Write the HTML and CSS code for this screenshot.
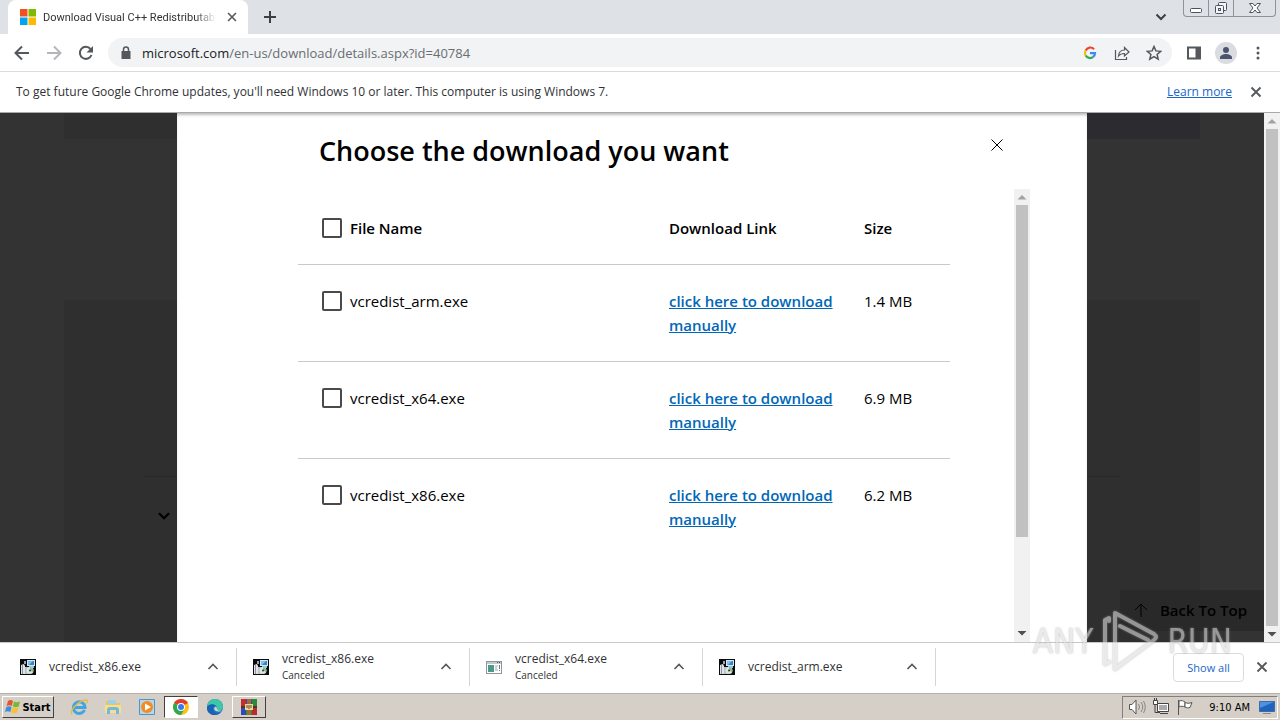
FILE: index.html
```html
<!DOCTYPE html>
<html lang="en">
  <head>
    <meta charset="utf-8">
    <title>Download Visual C++ Redistributable</title>
    <link rel="stylesheet" href="styles.css">
  </head>
  <body>
    <!-- shapes used more than once -->
    <svg class="defs" width="0" height="0">
      <symbol id="x" viewBox="0 0 16 16"><path d="M3.500 3.500l9 9M12.500 3.500l-9 9" fill="none" stroke="currentColor" stroke-width="1.800"/></symbol>
      <symbol id="up" viewBox="0 0 16 16"><path d="M3.500 10L8 5.500l4.500 4.500" fill="none" stroke="currentColor" stroke-width="1.600"/></symbol>
      <symbol id="down" viewBox="0 0 16 16"><path d="M3.500 5.500L8 10l4.500-4.500" fill="none" stroke="currentColor" stroke-width="2"/></symbol>
      <symbol id="tri-up" viewBox="0 0 16 16"><path d="M3.500 10.500h9L8 6z" fill="currentColor"/></symbol>
      <symbol id="tri-down" viewBox="0 0 16 16"><path d="M3.500 6h9L8 10.500z" fill="currentColor"/></symbol>
      <symbol id="installer" viewBox="0 0 16 16">
        <rect width="16" height="16" fill="#0a0a0a"/>
        <path d="M7 1h8v6H7z" fill="#d5e6f2"/><path d="M8 2h6v4H8z" fill="#2f86c8"/><path d="M8 2h5L9 6H8z" fill="#7cc0ec"/>
        <path d="M9 7h5v2H9z" fill="#a9bccb"/>
        <path d="M1 6l3-1 1 2v8H1z" fill="#dfe3e8"/><path d="M2 6h1v9H2z" fill="#8894a3"/>
        <path d="M5 8h4v7H5z" fill="#b7c2cc"/><path d="M4 2h2v3H4z" fill="#9aa4ae"/>
        <circle cx="10" cy="11.500" r="3.500" fill="#dbe8dd"/><path d="M10 8a3.500 3.500 0 0 1 3 5l-3-1.500z" fill="#7fc09b"/><circle cx="10" cy="11.500" r="1" fill="#333"/>
      </symbol>
    </svg>

    <header class="tabstrip">
      <div class="tab">
        <svg class="i16" viewBox="0 0 16 16"><path d="M0 0h7.500v7.500H0z" fill="#f25022"/><path d="M8.500 0H16v7.500H8.500z" fill="#7fba00"/><path d="M0 8.500h7.500V16H0z" fill="#00a4ef"/><path d="M8.500 8.500H16V16H8.500z" fill="#ffb900"/></svg>
        <span class="tab-title">Download Visual C++ Redistributable</span>
        <button class="icon" aria-label="Close tab"><svg class="i14"><use href="#x"/></svg></button>
      </div>
      <button class="icon new-tab" aria-label="New tab"><svg class="i16" viewBox="0 0 16 16"><path d="M8 2v12M2 8h12" stroke="currentColor" stroke-width="2"/></svg></button>
      <button class="icon search-tabs" aria-label="Search tabs"><svg class="i16"><use href="#down"/></svg></button>
      <div class="window-buttons">
        <button aria-label="Minimize"><svg width="14" height="14" viewBox="0 0 14 14"><rect x="1.500" y="7.500" width="11" height="4" rx="1" fill="#fff" stroke="#4c5360"/></svg></button>
        <button aria-label="Restore"><svg width="14" height="14" viewBox="0 0 14 14" fill="#f4f5f7" stroke="#4c5360"><rect x="4.500" y="1.500" width="8" height="8" rx="1"/><rect x="1.500" y="4.500" width="8" height="8" rx="1"/><rect x="4.500" y="7.500" width="2" height="2"/></svg></button>
        <button class="wide" aria-label="Close"><svg width="14" height="14" viewBox="0 0 14 14"><path d="M1.500 2.500h3.500L7 5l2-2.500h3.500L9 7l3.500 4.500H9L7 9l-2 2.500H1.500L5 7z" fill="#fff" stroke="#4c5360"/></svg></button>
      </div>
    </header>

    <nav class="toolbar">
      <button class="icon" aria-label="Back"><svg class="i16" viewBox="0 0 16 16"><path d="M15 8H2M8 1.500L1.500 8 8 14.500" fill="none" stroke="currentColor" stroke-width="2"/></svg></button>
      <button class="icon off" aria-label="Forward"><svg class="i16" viewBox="0 0 16 16"><path d="M1 8h13M8 1.500L14.500 8 8 14.500" fill="none" stroke="currentColor" stroke-width="2"/></svg></button>
      <button class="icon" aria-label="Reload"><svg class="i16" viewBox="0 0 16 16"><path d="M13.500 10A6 6 0 1 1 12.500 4" fill="none" stroke="currentColor" stroke-width="2"/><path d="M15 1v6.500H8.500z" fill="currentColor"/></svg></button>
      <div class="omnibox">
        <svg class="i14 lock" viewBox="0 0 14 14"><path d="M2.500 5h9v8h-9z" fill="currentColor"/><path d="M4.500 6V3.500a2.500 2.500 0 0 1 5 0V6" fill="none" stroke="currentColor" stroke-width="1.500"/></svg>
        <a class="url" href="#"><b>microsoft.com</b>/en-us/download/details.aspx?id=40784</a>
        <button class="icon" aria-label="Google"><svg class="i14" viewBox="0 0 14 14" fill="none" stroke-width="2.200"><path d="M11 3.200A5 5 0 0 0 2.700 4.500" stroke="#ea4335"/><path d="M2.700 4.500a5 5 0 0 0 0 5" stroke="#fbbc05"/><path d="M2.700 9.500a5 5 0 0 0 7.500 1.400" stroke="#34a853"/><path d="M10.200 10.900A5 5 0 0 0 12 7.200H7" stroke="#4285f4"/></svg></button>
        <button class="icon" aria-label="Share"><svg class="i16" viewBox="0 0 16 16" fill="none" stroke="currentColor" stroke-width="1.200"><path d="M1.500 5v9.500h11V12"/><path d="M4.500 11c.3-4 2.500-6 6-6V2.500L15 7l-4.500 4V8.500c-2.500 0-4.500.5-6 2.500z"/></svg></button>
        <button class="icon" aria-label="Bookmark"><svg class="i16" viewBox="0 0 16 16"><path d="M8 1.500l1.900 4.400 4.800.4-3.600 3.200 1.100 4.700L8 11.700l-4.200 2.500 1.100-4.700L1.300 6.300l4.800-.4z" fill="none" stroke="currentColor" stroke-width="1.500"/></svg></button>
      </div>
      <button class="icon" aria-label="Side panel"><svg class="i16" viewBox="0 0 16 16"><path d="M1 1.500h14v13H1z" fill="currentColor"/><path d="M3 3.500h6.500v9H3z" fill="#fff"/></svg></button>
      <button class="icon" aria-label="Profile"><svg class="i22" viewBox="0 0 22 22"><circle cx="11" cy="11" r="11" fill="#dadce0"/><circle cx="11" cy="8" r="3" fill="#4a5470"/><path d="M5 17v-1.500c0-2.300 3.500-3.500 6-3.500s6 1.200 6 3.500V17z" fill="#4a5470"/></svg></button>
      <button class="icon" aria-label="Menu"><svg class="i16" viewBox="0 0 16 16" fill="currentColor"><circle cx="8" cy="3" r="1.500"/><circle cx="8" cy="8" r="1.500"/><circle cx="8" cy="13" r="1.500"/></svg></button>
    </nav>

    <div class="infobar">
      <span>To get future Google Chrome updates, you'll need Windows 10 or later. This computer is using Windows 7.</span>
      <a href="#">Learn more</a>
      <button class="icon" aria-label="Dismiss"><svg class="i16"><use href="#x"/></svg></button>
    </div>

    <div class="viewport">
      <div class="page">
        <div class="banner"><div class="banner-art"></div></div>
        <div class="panel">
          <div class="accordion"><svg class="i18"><use href="#down"/></svg></div>
        </div>
        <a class="to-top" href="#"><svg class="i16" viewBox="0 0 16 16"><path d="M8 15V2M2 8l6-6 6 6" fill="none" stroke="currentColor"/></svg>Back To Top</a>

        <div class="modal" role="dialog" aria-labelledby="modal-title">
          <div class="modal-head">
            <h1 id="modal-title">Choose the download you want</h1>
            <button class="icon" aria-label="Close"><svg class="i14" viewBox="0 0 14 14"><path d="M1.500 1.500l11 11M12.500 1.500l-11 11" stroke="currentColor"/></svg></button>
          </div>
          <div class="modal-body">
            <table>
              <thead>
                <tr>
                  <th class="col-name"><label><input type="checkbox">File Name</label></th>
                  <th class="col-link">Download Link</th>
                  <th>Size</th>
                </tr>
              </thead>
              <tbody>
                <tr>
                  <td><label><input type="checkbox">vcredist_arm.exe</label></td>
                  <td><a href="#">click here to download manually</a></td>
                  <td>1.4 MB</td>
                </tr>
                <tr>
                  <td><label><input type="checkbox">vcredist_x64.exe</label></td>
                  <td><a href="#">click here to download manually</a></td>
                  <td>6.9 MB</td>
                </tr>
                <tr>
                  <td><label><input type="checkbox">vcredist_x86.exe</label></td>
                  <td><a href="#">click here to download manually</a></td>
                  <td>6.2 MB</td>
                </tr>
              </tbody>
            </table>
            <div class="scrollbar">
              <svg class="i16"><use href="#tri-up"/></svg>
              <div class="track"><div class="thumb"></div></div>
              <svg class="i16 active"><use href="#tri-down"/></svg>
            </div>
          </div>
        </div>
      </div>
      <div class="scrollbar">
        <svg class="i16"><use href="#tri-up"/></svg>
        <div class="track"><div class="thumb full"></div></div>
        <svg class="i16 active"><use href="#tri-down"/></svg>
      </div>
    </div>

    <div class="shelf">
      <div class="download">
        <svg class="i16"><use href="#installer"/></svg>
        <div class="file">vcredist_x86.exe</div>
        <button class="icon" aria-label="Options"><svg class="i16"><use href="#up"/></svg></button>
      </div>
      <div class="download">
        <svg class="i16"><use href="#installer"/></svg>
        <div class="file">vcredist_x86.exe<small>Canceled</small></div>
        <button class="icon" aria-label="Options"><svg class="i16"><use href="#up"/></svg></button>
      </div>
      <div class="download">
        <svg class="i16" viewBox="0 0 16 16"><rect x=".5" y="2.500" width="15" height="12" fill="#fff" stroke="#8f979e"/><path d="M1 3h14v2H1z" fill="#c3c9ce"/><path d="M11 3.500h1M13 3.500h1" stroke="#555"/><path d="M2 6h6v7H2z" fill="#4c9a8a"/><path d="M9 7h3M9 9h2M9 11h3" stroke="#9aa"/><path d="M13.500 6v4M13.500 11v1" stroke="#777"/></svg>
        <div class="file">vcredist_x64.exe<small>Canceled</small></div>
        <button class="icon" aria-label="Options"><svg class="i16"><use href="#up"/></svg></button>
      </div>
      <div class="download">
        <svg class="i16"><use href="#installer"/></svg>
        <div class="file">vcredist_arm.exe</div>
        <button class="icon" aria-label="Options"><svg class="i16"><use href="#up"/></svg></button>
      </div>
      <button class="show-all">Show all</button>
      <button class="icon" aria-label="Close shelf"><svg class="i16"><use href="#x"/></svg></button>
    </div>

    <footer class="taskbar">
      <button class="start raised">
        <svg class="i16" viewBox="0 0 16 16"><path d="M3 2c2-1.500 3.500-1 5 0L6.800 7C5 6 3.500 6 1.600 7z" fill="#e8532a"/><path d="M9 2.500c1.700 1 3.500 1 6 0L13.700 7.500c-2 1-4 1-5.900 0z" fill="#7ab833"/><path d="M1.400 8c2-1 3.500-1 5.200 0L5.300 13c-1.800-1-3.300-1-5.300 0z" fill="#3b8ede"/><path d="M7.500 8.500c2 1 4 1 6 0l-1.400 5c-2 1-4 1-5.900 0z" fill="#fbc02d"/></svg>
        Start
      </button>
      <button class="task" aria-label="Internet Explorer"><svg class="i18" viewBox="0 0 18 18" fill="none"><path d="M14.500 12A5.800 5.800 0 1 1 15 9.500H5" stroke="#42a5e0" stroke-width="3"/><path d="M2 16.500C-1 12 10 2 16 2c2 0 1.500 2 .5 3.500" stroke="#e8bb3a" stroke-width="1.300"/></svg></button>
      <button class="task" aria-label="Explorer"><svg class="i18" viewBox="0 0 18 18"><path d="M2 3h5l1 2h8v7H2z" fill="#e9c65c"/><path d="M4 2h8v4H4z" fill="#9ed0e8"/><path d="M1 7h16v8H1z" fill="#f6e08f"/><path d="M3 16v-4c0-2 1-3 3-3h6c2 0 3 1 3 3v4h-3v-4H6v4z" fill="#73b9dc"/></svg></button>
      <button class="task" aria-label="Media Player"><svg class="i18" viewBox="0 0 18 18"><path d="M1.500 1.500h15v15h-15z" fill="#b5d6ee" stroke="#4d94c9"/><circle cx="9" cy="9" r="6" fill="#f28c1e"/><path d="M7 5.500v7L13 9z" fill="#fff"/></svg></button>
      <button class="task pressed" aria-label="Chrome"><svg class="i16" viewBox="0 0 16 16"><circle cx="8" cy="8" r="8" fill="#fbc116"/><path d="M8 8L1.100 4A8 8 0 0 1 14.900 4z" fill="#e33b2e"/><path d="M1.100 4A8 8 0 0 0 8 16l3.500-6L8 8z" fill="#2da94f"/><circle cx="8" cy="8" r="4" fill="#fff"/><circle cx="8" cy="8" r="3" fill="#3b79e8"/></svg></button>
      <button class="task" aria-label="Edge"><svg class="i16" viewBox="0 0 16 16"><circle cx="8" cy="8" r="8" fill="#1478c8"/><path d="M0 8a8 8 0 0 1 16 0c0 2.500-1.800 3.500-4 3.500-1.500 0-2.600-.5-2-1.500C11 7.500 8 5 5 5.500 2.500 6 1 7 0 8z" fill="#3cc8a8"/><path d="M0 8c1.500-3 7-4 9-.5C6.500 6.500 5 9 6.500 12c1 2 3.500 3 7 1.800C9 18-1 16 0 8z" fill="#1b62b5"/><path d="M9 7.500C6.800 8 6.500 10 8 11.500c1.500 1.300 4 1.500 6.500.2-1.500-.1-2.500 0-3.500-.4C9.500 10.500 10.500 9 9 7.500z" fill="#d4d0c8"/></svg></button>
      <button class="task raised" aria-label="WinRAR"><svg class="i16" viewBox="0 0 16 16"><path d="M0 0h5v7H0z" fill="#c1302c"/><path d="M5 0h6v7H5z" fill="#3a4db5"/><path d="M11 0h5v7h-5z" fill="#2b8a3a"/><path d="M0 9h5v7H0z" fill="#3249b0"/><path d="M5 9h6v7H5z" fill="#2c8f45"/><path d="M11 9h5v7h-5z" fill="#b62d2d"/><path d="M0 7h16v2H0z" fill="#5b3226"/><path d="M6 0h4v16H6z" fill="#a8682e"/><path d="M4 5h8v6H4z" fill="#e9d9a0"/><path d="M6 6v3M8 6v4M10 6v3" stroke="#6a3b1c"/></svg></button>
      <div class="tray">
        <svg class="i18" viewBox="0 0 18 18" fill="#fff" stroke="#555"><path d="M1.500 6.500H4l4-4.500v14l-4-4.500H1.500z"/><path d="M10.500 6q2 3 0 6M13 4q3.500 5 0 10M15.500 3q3.500 6 0 12" fill="none" stroke="#888"/></svg>
        <svg class="i18" viewBox="0 0 18 18" fill="#fff" stroke="#444"><path d="M5.500 5.500h11v8h-11z"/><path d="M7 7h8v5H7z" fill="#aaa" stroke="none"/><path d="M8 15.500h8M3 7v7.500h5" fill="none"/><path d="M1.500 2.500h4v4h-4zM2.500 0v2M4.500 0v2"/></svg>
        <svg class="i18" viewBox="0 0 18 18" fill="#fff" stroke="#555"><path d="M2.500 2v15M3 3c3-1 4 0 6 1v5C7 8 5 8 3 9z"/><path d="M9 4.500c2 1 4 1 7 0-1 2-1 3-2 5-2 .5-3.500.5-5-.5z"/></svg>
        <time>9:10 AM</time>
        <svg class="i16" viewBox="0 0 16 16"><path d="M.5 2.500h15v10H.5z" fill="#1f63bd" stroke="#3c6ea5"/><path d="M1 3h14L1 9z" fill="#4b93e0"/><path d="M4 14h8v1H4z" fill="#8a8a8a"/></svg>
      </div>
    </footer>

    <div class="watermark">
      <span>ANY</span>
      <svg width="58" height="64" viewBox="0 0 58 64" fill="none" stroke="currentColor" stroke-width="4" stroke-linejoin="round" stroke-linecap="round"><path d="M8 12V9L4 11v44l4-2"/><path d="M14 60V4l39 21q4 3 0 6L14 60M19 17l28 14"/></svg>
      <span>RUN</span>
    </div>
  </body>
</html>
```
FILE: styles.css
```css
* {
  box-sizing: border-box;
}
body {
  margin: 0;
  height: 100vh;
  display: flex;
  flex-direction: column;
  overflow: hidden;
  background: white;
  color: #303236;
  font-family: "Open Sans", "Noto Sans", sans-serif;
  font-size: 12px;
}
svg {
  display: block;
  flex: none;
}
button {
  font: inherit;
  color: inherit;
  border: 0;
  background: none;
  padding: 0;
}
.defs {
  position: absolute;
}
.i14 { width: 14px; height: 14px; }
.i16 { width: 16px; height: 16px; }
.i18 { width: 18px; height: 18px; }
.i22 { width: 22px; height: 22px; }
.icon {
  display: flex;
  flex: none;
  width: 32px;
  height: 28px;
  align-items: center;
  justify-content: center;
  color: #54575b;
}

/* tabs */
.tabstrip {
  display: flex;
  flex: none;
  height: 34px;
  padding: 0 4px 0 8px;
  background: #dee1e6;
}
.tab {
  display: flex;
  align-items: center;
  width: 240px;
  padding-left: 12px;
  background: white;
  border-radius: 8px 8px 0 0;
}
.tab-title {
  flex: 1;
  margin-left: 7px;
  overflow: hidden;
  white-space: nowrap;
  font-family: Roboto, "Liberation Sans", sans-serif;
  font-size: 11px;
  mask-image: linear-gradient(to right, black 88%, transparent);
}
.new-tab, .search-tabs {
  height: 34px;
  width: 44px;
  color: #3c4043;
}
.search-tabs {
  margin-left: auto;
}
.window-buttons {
  display: flex;
  height: 17px;
  border: 1px solid #8d939e;
  border-top: 0;
  border-radius: 0 0 4px 4px;
}
.window-buttons button {
  display: flex;
  justify-content: center;
  align-items: center;
  width: 25px;
  border-right: 1px solid #8d939e;
}
.window-buttons .wide {
  width: 41px;
  border: 0;
}

/* toolbar */
.toolbar {
  display: flex;
  flex: none;
  align-items: center;
  height: 38px;
  padding: 0 6px;
  border-bottom: 1px solid #d9dbde;
}
.off {
  color: #b4b6b9;
}
.omnibox {
  display: flex;
  flex: 1;
  align-items: center;
  height: 29px;
  margin: 0 6px;
  padding: 0 2px 0 11px;
  border-radius: 15px;
  background: #f1f3f4;
}
.lock {
  color: #54575b;
}
.url {
  flex: 1;
  margin-left: 9px;
  font-size: 13px;
  color: #6a6d71;
  text-decoration: none;
}
.url b {
  font-weight: 400;
  color: #202124;
}
.infobar {
  display: flex;
  flex: none;
  align-items: center;
  height: 41px;
  padding: 0 8px 1px 16px;
  border-bottom: 1px solid #aaa;
}
.infobar a {
  margin: 0 8px 0 auto;
  color: #1a66c9;
}

/* web page */
.viewport {
  display: flex;
  flex: 1;
  min-height: 0;
}
.page {
  position: relative;
  display: flex;
  flex: 1;
  flex-direction: column;
  gap: 161px;
  padding: 0 5%;
  overflow: hidden;
  background: #333;
}
.banner {
  display: flex;
  justify-content: flex-end;
  flex: none;
  height: 26px;
  background: #2f2f2f;
}
.banner-art {
  width: 50%;
  background: #2b2b30;
}
.panel {
  flex: 1;
  padding: 176px 7%;
  background: #2f2f2f;
}
.accordion {
  padding: 30px 11px;
  border-top: 1px solid #292929;
  color: black;
}
.to-top {
  position: absolute;
  right: 0;
  bottom: 11px;
  display: flex;
  align-items: center;
  gap: 11px;
  height: 41px;
  padding: 0 17px 2px 13px;
  background: #292929;
  color: black;
  font-size: 15px;
  font-weight: 600;
  text-decoration: none;
}
.modal {
  position: absolute;
  top: 0;
  bottom: 0;
  left: 14%;
  width: 72%;
  display: flex;
  flex-direction: column;
  padding: 0 57px 0 121px;
  background: white;
  color: black;
  box-shadow: inset 0 3px 3px -1px #bbb;
}
.modal-head {
  display: flex;
  justify-content: space-between;
  align-items: flex-start;
  flex: none;
  height: 76px;
  padding: 18px 17px 0 21px;
}
.modal-head .icon {
  color: black;
}
h1 {
  margin: 0;
  font-size: 27px;
  line-height: 40px;
  font-weight: 600;
}
.modal-body {
  display: flex;
  flex: 1;
  justify-content: space-between;
  min-height: 0;
}
table {
  width: 652px;
  margin-top: 3px;
  align-self: flex-start;
  border-collapse: collapse;
  table-layout: fixed;
  font-size: 15px;
  line-height: 24px;
}
th, td {
  padding: 24px 0 24px 24px;
  text-align: left;
  vertical-align: top;
}
th {
  font-weight: 600;
}
td {
  border-top: 1px solid #c9c9c9;
}
td a {
  color: #0067b8;
  font-weight: 600;
}
.col-name {
  width: 347px;
}
.col-link {
  width: 195px;
}
label {
  display: flex;
  align-items: center;
  gap: 8px;
}
input {
  appearance: none;
  width: 20px;
  height: 20px;
  margin: 0;
  border: 2px solid #4a4a4a;
  border-radius: 2px;
}

/* scrollbars */
.scrollbar {
  display: flex;
  flex-direction: column;
  width: 16px;
  background: #f1f1f1;
  color: #a3a3a3;
}
.scrollbar .active {
  color: #505050;
}
.modal-body .scrollbar {
  padding-bottom: 1px;
}
.track {
  flex: 1;
  padding: 0 2px;
}
.thumb {
  height: 79%;
  background: #c1c1c1;
}
.full {
  height: 100%;
}

/* downloads */
.shelf {
  display: flex;
  flex: none;
  align-items: center;
  height: 51px;
  padding: 0 2px 2px 4px;
  border-top: 1px solid #c8c8c8;
}
.download {
  display: flex;
  align-items: center;
  width: 233px;
  height: 38px;
  padding: 0 7px 0 16px;
  border-right: 1px solid #d5d5d5;
}
.file {
  flex: 1;
  margin-left: 13px;
  line-height: 16px;
}
.file small {
  display: block;
  font-size: 10px;
}
.show-all {
  width: 71px;
  height: 29px;
  margin: 0 2px 0 auto;
  border: 1px solid #dadce0;
  border-radius: 4px;
  color: #1a66c9;
  font-size: 11px;
}

/* taskbar */
.taskbar {
  display: flex;
  flex: none;
  align-items: center;
  height: 27px;
  padding: 0 2px;
  border-top: 1px solid #b5b3ae;
  background: #d5cfc7;
  color: black;
  font-family: "DejaVu Sans Condensed", "Liberation Sans", sans-serif;
  font-size: 11px;
}
.task, .start {
  display: flex;
  align-items: center;
  justify-content: center;
  width: 34px;
  height: 22px;
}
.start {
  width: 52px;
  gap: 1px;
  margin-right: 8px;
  font-weight: 700;
}
.raised {
  border: 1px solid;
  border-color: white #404040 #404040 white;
}
.pressed {
  border: 1px solid;
  border-color: #404040 white white #404040;
  background: white;
}
.tray {
  display: flex;
  align-items: center;
  gap: 6px;
  height: 23px;
  margin-left: auto;
  padding: 0 2px 0 5px;
  border: 1px solid;
  border-color: #808080 white white #808080;
}
.tray time {
  margin: 0 3px 0 9px;
}

.watermark {
  position: absolute;
  right: 48px;
  bottom: 47px;
  display: flex;
  align-items: center;
  gap: 8px;
  color: #ddd;
  opacity: 0.6;
  font-family: "DejaVu Sans Condensed", sans-serif;
  font-size: 33px;
  pointer-events: none;
  filter: drop-shadow(0 0 1px #999);
}
```
